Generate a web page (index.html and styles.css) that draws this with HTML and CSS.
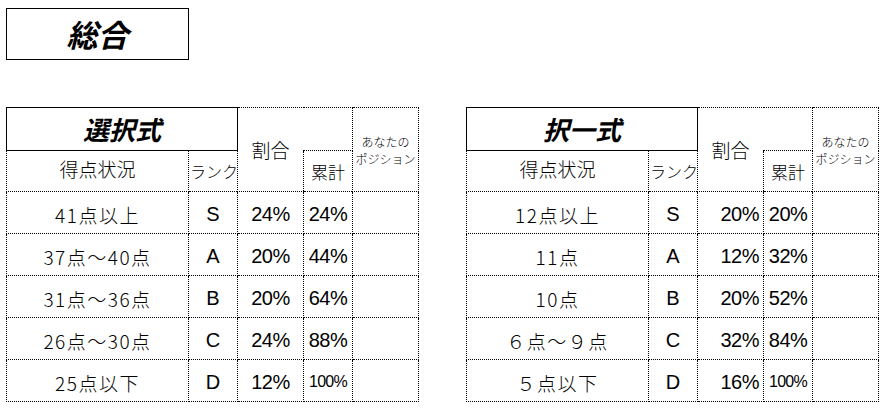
FILE: index.html
```html
<!DOCTYPE html>
<html lang="ja">
<head>
<meta charset="utf-8">
<title>総合</title>
<link rel="stylesheet" href="styles.css">
</head>
<body>
<div class="page">
  <div class="title">総合</div>
  <div class="tables">
    <table class="score">
      <colgroup><col class="c1"><col class="c2"><col class="c3"><col class="c4"><col class="c5"></colgroup>
      <tr class="r1">
        <th colspan="2" class="head">選択式</th>
        <th rowspan="2" class="ratio">割合</th>
        <td class="blank"></td>
        <th rowspan="2" class="pos"><span class="ln">あなたの</span><span class="ln">ポジション</span></th>
      </tr>
      <tr class="r2">
        <th class="status">得点状況</th>
        <th class="rank-h">ランク</th>
        <th class="cum">累計</th>
      </tr>
      <tr><td class="range">41点以上</td><td class="rank">S</td><td class="pct">24%</td><td class="pct">24%</td><td></td></tr>
      <tr><td class="range">37点～40点</td><td class="rank">A</td><td class="pct">20%</td><td class="pct">44%</td><td></td></tr>
      <tr><td class="range">31点～36点</td><td class="rank">B</td><td class="pct">20%</td><td class="pct">64%</td><td></td></tr>
      <tr><td class="range">26点～30点</td><td class="rank">C</td><td class="pct">24%</td><td class="pct">88%</td><td></td></tr>
      <tr><td class="range">25点以下</td><td class="rank">D</td><td class="pct">12%</td><td class="pct small">100%</td><td></td></tr>
    </table>
    <table class="score right">
      <colgroup><col class="c1"><col class="c2"><col class="c3"><col class="c4"><col class="c5"></colgroup>
      <tr class="r1">
        <th colspan="2" class="head">択一式</th>
        <th rowspan="2" class="ratio">割合</th>
        <td class="blank"></td>
        <th rowspan="2" class="pos"><span class="ln">あなたの</span><span class="ln">ポジション</span></th>
      </tr>
      <tr class="r2">
        <th class="status">得点状況</th>
        <th class="rank-h">ランク</th>
        <th class="cum">累計</th>
      </tr>
      <tr><td class="range">12点以上</td><td class="rank">S</td><td class="pct ra">20%</td><td class="pct">20%</td><td></td></tr>
      <tr><td class="range">11点</td><td class="rank">A</td><td class="pct ra">12%</td><td class="pct">32%</td><td></td></tr>
      <tr><td class="range">10点</td><td class="rank">B</td><td class="pct ra">20%</td><td class="pct">52%</td><td></td></tr>
      <tr><td class="range">６点～９点</td><td class="rank">C</td><td class="pct ra">32%</td><td class="pct">84%</td><td></td></tr>
      <tr><td class="range">５点以下</td><td class="rank">D</td><td class="pct ra">16%</td><td class="pct small">100%</td><td></td></tr>
    </table>
  </div>
</div>
</body>
</html>
```

FILE: styles.css
```css
html, body {
  margin: 0;
  padding: 0;
  background: #fff;
  color: #000;
  font-family: "Noto Sans CJK JP", sans-serif;
}
.page {
  padding: 8px 0 0 6px;
}
.title {
  width: 181px;
  height: 49px;
  border: 1px solid #000;
  display: flex;
  align-items: center;
  justify-content: center;
  font-size: 31px;
  font-weight: bold;
  font-style: italic;
  line-height: 1;
  padding-bottom: 1px;
}
.tables {
  display: flex;
  gap: 47px;
  margin-top: 47px;
}
.score {
  border-collapse: collapse;
  table-layout: fixed;
  width: 413px;
}
.c1 { width: 182px; }
.c2 { width: 49px; }
.c3 { width: 66px; }
.c4 { width: 49px; }
.c5 { width: 66px; }
.score th, .score td {
  border: 1px dotted #000;
  padding: 0;
  font-weight: normal;
  text-align: center;
  vertical-align: middle;
  overflow: hidden;
  white-space: nowrap;
}
.score tr { height: 42px; }
.score tr.r1 { height: 43px; }
.score tr.r2 { height: 41px; }
.score .head {
  border: 1px solid #000;
  font-size: 26px;
  font-weight: bold;
  font-style: italic;
  line-height: 1;
}
.score .ratio {
  border-right: none;
  font-size: 19px;
  font-weight: 300;
}
.score .blank {
  border-left: none;
}
.score .pos {
  font-size: 12px;
  font-weight: 300;
  line-height: 17px;
  padding-top: 1px;
}
.score .pos .ln {
  display: block;
  height: 17px;
  overflow: hidden;
}
.score .status {
  font-size: 19px;
  font-weight: 300;
  padding-bottom: 6px;
}
.score .rank-h {
  font-size: 16px;
  font-weight: 300;
  text-align: left;
  padding-left: 1px;
}
.score .cum {
  font-size: 17px;
  font-weight: 300;
}
.score .range {
  font-size: 19px;
  font-weight: 300;
  letter-spacing: 1.5px;
  padding-top: 4px;
}
.score .rank {
  font-family: "Liberation Sans", Arial, sans-serif;
  font-size: 20px;
  padding-top: 4px;
}
.score .pct {
  font-family: "Liberation Sans", Arial, sans-serif;
  font-size: 20px;
  letter-spacing: -0.5px;
  padding-top: 3px;
}
.score .pct.ra {
  text-align: right;
  padding-right: 4px;
}
.score .pct.small {
  font-size: 16px;
  letter-spacing: -0.7px;
}
```
